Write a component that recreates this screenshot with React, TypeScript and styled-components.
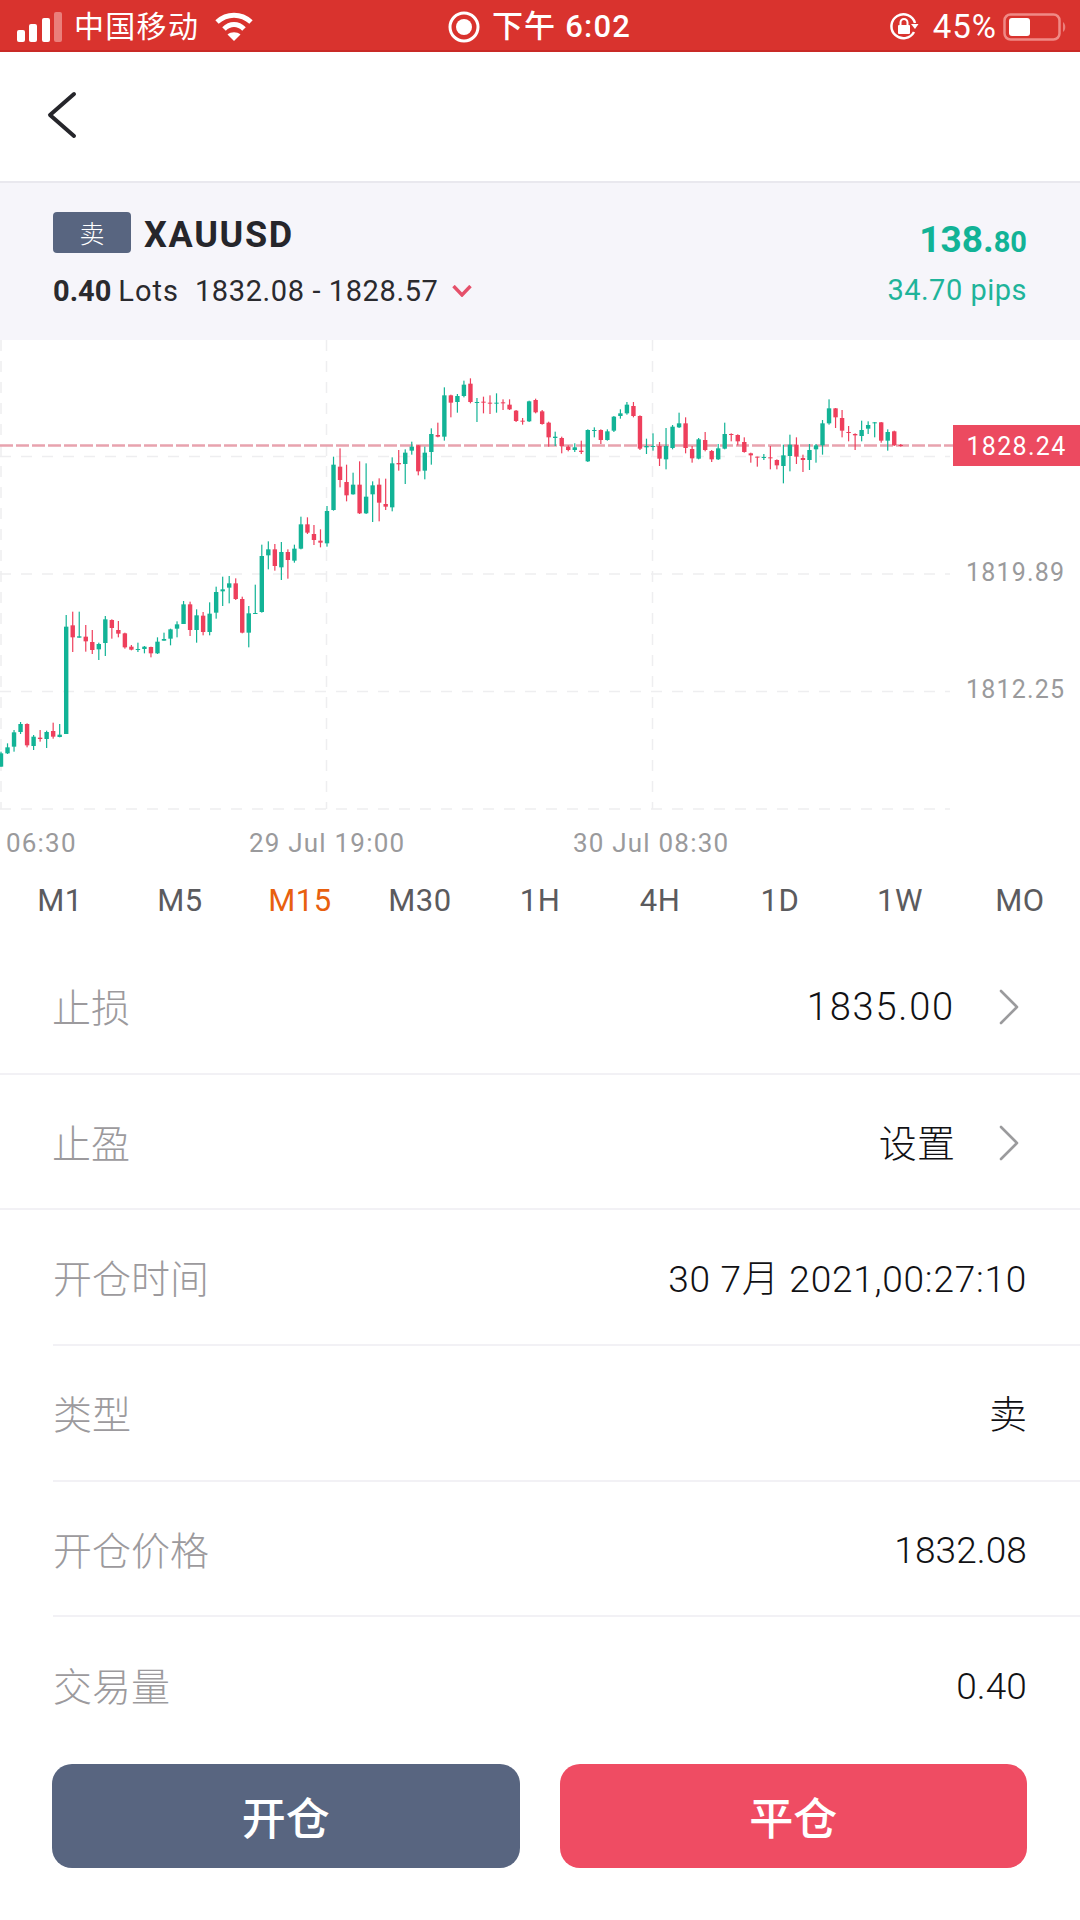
import React from 'react'
import styled, { createGlobalStyle } from 'styled-components'

const GlobalStyle = createGlobalStyle`
  html, body {
    margin: 0;
    padding: 0;
    background: #fff;
  }
  * {
    box-sizing: border-box;
  }
`

const FONT = `Roboto, "Noto Sans CJK SC", sans-serif`
const UP = '#12b396'
const DOWN = '#ee3f5c'

const Page = styled.div`
  width: 1080px;
  height: 1920px;
  overflow: hidden;
  display: flex;
  flex-direction: column;
  background: #fff;
  font-family: ${FONT};
`

const StatusBar = styled.div`
  height: 52px;
  flex: none;
  padding: 4px 13px 0 17px;
  display: grid;
  grid-template-columns: 1fr auto 1fr;
  align-items: center;
  background: #d9332e;
  border-bottom: 2px solid #c92a26;
  color: #fff;
`

const StatusGroup = styled.div<{ $end?: boolean }>`
  display: flex;
  align-items: center;
  justify-content: ${p => (p.$end ? 'flex-end' : 'flex-start')};
`

const Carrier = styled.span`
  margin: 0 15px 0 11px;
  font-size: 30px;
  line-height: 40px;
  letter-spacing: 1.3px;
`

const Clock = styled.span`
  margin: 0 5px 0 12px;
  font-size: 31px;
  line-height: 40px;
  font-weight: 500;
  letter-spacing: 1.2px;
`

const BatteryText = styled.span`
  margin: 0 6px 0 14px;
  font-size: 33px;
  line-height: 40px;
  letter-spacing: 1px;
`

const Nav = styled.div`
  height: 129px;
  flex: none;
  padding: 0 0 4px 46px;
  display: flex;
  align-items: center;
`

const Quote = styled.div`
  height: 159px;
  flex: none;
  padding: 28px 53px 0 53px;
  display: flex;
  justify-content: space-between;
  background: #f6f5fa;
  border-top: 2px solid #e9e8ee;
`

const QuoteSide = styled.div<{ $end?: boolean }>`
  display: flex;
  flex-direction: column;
  align-items: ${p => (p.$end ? 'flex-end' : 'flex-start')};
`

const TitleRow = styled.div`
  height: 42px;
  display: flex;
  align-items: center;
`

const SideBadge = styled.span`
  width: 78px;
  height: 41px;
  margin-right: 13px;
  display: flex;
  align-items: center;
  justify-content: center;
  background: #586580;
  border-radius: 4px;
  color: #fff;
  font-size: 25px;
  font-weight: 300;
`

const Symbol = styled.span`
  padding-top: 5px;
  font-size: 36px;
  font-weight: 700;
  letter-spacing: 1.7px;
  color: #26262b;
`

const InfoRow = styled.div`
  margin-top: 18px;
  height: 40px;
  display: flex;
  align-items: center;
  font-size: 29px;
  color: #2a2a2e;
`

const Lots = styled.b`
  font-weight: 700;
  margin-right: 7px;
`

const LotsUnit = styled.span`
  letter-spacing: 1px;
`

const Prices = styled.span`
  margin: 0 14px 0 16px;
  letter-spacing: .6px;
`

const Profit = styled.div`
  margin-top: 8px;
  height: 42px;
  color: ${UP};
  font-size: 37px;
  font-weight: 700;
  line-height: 42px;
`

const ProfitCents = styled.span`
  font-size: 29px;
`

const Pips = styled.div`
  margin-top: 9px;
  height: 40px;
  line-height: 40px;
  color: #1fb49a;
  font-size: 29px;
  letter-spacing: .5px;
`

const Chart = styled.div`
  position: relative;
  height: 530px;
  flex: none;
  background: #fff;
`

const ChartSvg = styled.svg`
  display: block;
  width: 1080px;
  height: 530px;
`

const AxisText = styled.text`
  font-family: ${FONT};
  font-size: 25px;
  letter-spacing: 1.2px;
  fill: #9a9a9c;
`

const TimeText = styled(AxisText)`
  font-size: 26px;
`

const PriceTag = styled.div`
  position: absolute;
  left: 953px;
  top: 85px;
  width: 127px;
  height: 41px;
  padding-top: 2px;
  display: flex;
  align-items: center;
  justify-content: center;
  background: #ec4a60;
  color: #fff;
  font-size: 25px;
  letter-spacing: 1.3px;
`

const Tabs = styled.div`
  height: 60px;
  margin-bottom: 9px;
  flex: none;
  display: grid;
  grid-template-columns: repeat(9, 120px);
`

const Tab = styled.div<{ $active?: boolean }>`
  display: flex;
  align-items: center;
  justify-content: center;
  font-size: 31px;
  letter-spacing: .5px;
  color: ${p => (p.$active ? '#e8600f' : '#5b5b5e')};
`

const Row = styled.div<{ $inset?: boolean; $last?: boolean }>`
  height: 135.7px;
  flex: none;
  margin-left: ${p => (p.$inset ? '53px' : '0')};
  padding: 0 53px 2px ${p => (p.$inset ? '0' : '52px')};
  display: flex;
  align-items: center;
  justify-content: space-between;
  border-bottom: ${p => (p.$last ? 'none' : '2px solid #f2f1f5')};
`

const Label = styled.span`
  font-size: 39px;
  font-weight: 300;
  color: #9c9a9d;
`

const ValueGroup = styled.div`
  display: flex;
  align-items: center;
`

const Value = styled.span<{ $numeric?: boolean; $wide?: boolean }>`
  padding-top: ${p => (p.$numeric ? '5px' : '0')};
  font-size: ${p => (p.$numeric || p.$wide ? '37px' : '38px')};
  font-weight: 300;
  letter-spacing: ${p => (p.$wide ? '.75px' : '.1px')};
  color: #111114;
`

const BigValue = styled(Value)`
  font-size: 38px;
  letter-spacing: 1.8px;
`

const Arrow = styled.svg`
  display: block;
  margin: 4px 8px 0 44px;
`

const Actions = styled.div`
  padding: 11px 53px 0 52px;
  display: grid;
  grid-template-columns: 1fr 1fr;
  gap: 40px;
`

const ActionButton = styled.button<{ $tone: string }>`
  height: 104px;
  border: 0;
  border-radius: 20px;
  background: ${p => p.$tone};
  color: #fff;
  font-family: ${FONT};
  font-size: 44px;
  font-weight: 500;
`

// wick top, wick bottom, body top, body bottom, 1 = green, measured in the picture at 3x height
const CANDLES: [number, number, number, number, number][] = [
  [1235,1280,1240,1280,1],[1210,1242,1222,1240,1],[1170,1235,1177,1220,1],[1146,1182,1152,1176,1],
  [1150,1222,1152,1216,0],[1185,1230,1190,1218,1],[1170,1205,1193,1197,0],[1172,1224,1176,1197,1],
  [1148,1196,1173,1190,0],[1152,1192,1184,1191,1],[825,1182,860,1182,1],[815,936,856,892,0],
  [815,893,889,893,1],[855,935,890,904,0],[870,942,906,930,0],[908,960,912,928,1],
  [828,948,838,909,1],[838,896,840,864,0],[843,892,870,881,0],[878,926,880,922,0],
  [915,931,920,929,0],[908,936,927,930,1],[918,940,920,927,1],[920,952,921,940,0],
  [892,942,905,940,1],[878,902,897,902,1],[866,916,868,896,1],[844,892,853,866,1],
  [783,852,793,852,1],[785,888,793,870,0],[808,908,826,870,1],[816,886,827,876,0],
  [787,886,821,876,1],[740,836,756,818,1],[710,798,748,754,1],[708,790,730,743,1],
  [715,780,730,777,0],[770,880,777,878,0],[798,922,820,878,1],[734,822,819,821,1],
  [614,818,648,816,1],[604,688,628,646,1],[612,692,628,678,0],[606,720,636,682,1],
  [628,716,636,660,0],[614,668,626,662,1],[530,628,553,626,1],[532,582,553,578,0],
  [555,615,582,600,0],[568,622,602,608,0],[498,620,513,610,1],[350,512,374,510,1],
  [325,442,380,420,0],[374,484,426,466,0],[398,464,434,463,1],[364,522,434,520,0],
  [370,522,470,520,1],[424,546,436,463,1],[415,544,434,488,0],[416,510,492,500,0],
  [352,514,370,502,1],[330,392,369,373,0],[328,432,338,372,1],[305,344,320,332,1],
  [315,406,316,394,0],[320,418,338,392,1],[265,374,282,336,1],[248,292,285,290,0],
  [142,302,166,290,1],[164,232,166,188,0],[162,218,168,186,1],[122,172,134,168,1],
  [115,190,131,186,0],[174,246,186,188,1],[170,220,185,187,0],[166,222,188,190,0],
  [160,218,188,190,1],[178,210,187,189,0],[178,210,194,208,0],[210,246,212,243,0],
  [234,254,242,244,0],[182,246,184,244,1],[176,220,180,217,0],
  [210,254,214,252,0],[245,320,248,292,0],[275,318,290,294,1],[290,340,294,318,0],
  [316,334,320,330,0],[310,336,322,330,1],[302,342,332,336,0],[268,366,270,364,1],
  [262,292,270,272,1],[268,312,270,300,0],[268,302,274,300,1],[228,276,230,272,1],
  [208,236,220,228,1],[186,224,194,220,1],[186,232,198,228,0],[226,330,228,326,0],
  [296,342,318,322,1],[280,332,318,320,1],[306,378,318,356,0],[264,388,318,358,1],
  [255,328,260,324,1],[218,264,250,262,1],[232,340,250,324,0],[318,368,327,355,0],
  [294,358,298,356,1],[276,334,300,330,0],[330,366,333,358,0],[312,360,325,358,1],
  [248,328,282,326,1],[280,304,282,284,0],[283,316,285,304,0],[292,338,306,336,0],
  [338,368,340,346,0],[350,380,350,352,0],[342,360,351,353,1],[318,388,352,355,0],
  [358,388,360,376,0],[314,430,346,378,1],[284,394,314,348,1],[292,372,314,350,0],
  [344,396,354,360,0],[312,390,330,360,1],[312,368,316,328,1],[240,344,250,316,1],
  [178,254,205,250,1],[204,264,205,232,0],[210,292,234,272,0],[258,304,276,278,0],
  [280,330,282,286,0],[242,304,270,288,1],[244,282,255,266,1],[246,292,247,249,1],
  [246,308,247,302,0],[268,332,276,302,1],[272,318,274,316,0],[312,320,315,317,0],
]

const GRID_Y = [-1, 116.5, 234, 351.5, 469]
const GRID_X = [1, 326.5, 652.5]

const CandleChart = () => (
  <ChartSvg viewBox="0 0 1080 530">
    {GRID_Y.map(y => (
      <line key={y} x1="0" x2="950" y1={y} y2={y} stroke="#eeeef0" strokeWidth="1.5" strokeDasharray="11 10" />
    ))}
    {GRID_X.map(x => (
      <line key={x} x1={x} x2={x} y1="0" y2="469" stroke="#eeeef0" strokeWidth="1.5" strokeDasharray="11 10" />
    ))}
    <line x1="0" x2="953" y1="105.5" y2="105.5" stroke="#e8a3ae" strokeWidth="2.4" strokeDasharray="13 3" />
    {CANDLES.map(([wt, wb, bt, bb, up], i) => {
      const x = 1 + i * 6.52
      const color = up ? UP : DOWN
      return (
        <g key={i} fill={color}>
          <rect x={x - 0.6} y={wt / 3} width="1.2" height={(wb - wt) / 3} />
          <rect x={x - 2.2} y={bt / 3} width="4.4" height={Math.max(bb - bt, 3) / 3} />
        </g>
      )
    })}
    <AxisText x="966" y="241">1819.89</AxisText>
    <AxisText x="966" y="358">1812.25</AxisText>
    <TimeText x="6" y="512">06:30</TimeText>
    <TimeText x="249" y="512">29 Jul 19:00</TimeText>
    <TimeText x="573" y="512">30 Jul 08:30</TimeText>
  </ChartSvg>
)

const SignalIcon = () => (
  <svg width="46" height="30" viewBox="0 0 46 30" fill="#fff">
    <rect x="0" y="18" width="8" height="12" rx="2" />
    <rect x="12" y="12" width="8" height="18" rx="2" />
    <rect x="25" y="6" width="8" height="24" rx="2" />
    <rect x="37" y="0" width="8" height="30" rx="2" fill="#ea7f7b" />
  </svg>
)

const WifiIcon = () => (
  <svg width="40" height="30" viewBox="0 0 40 30" fill="none" stroke="#fff" strokeWidth="5">
    <path d="M3 10 C13 1 27 1 37 10" />
    <path d="M10 17 C16 11 24 11 30 17" />
    <path d="M20 29 L13.5 22.5 C17 19.5 23 19.5 26.5 22.5 Z" fill="#fff" stroke="none" />
  </svg>
)

const RecordIcon = () => (
  <svg width="32" height="32" viewBox="0 0 32 32">
    <circle cx="16" cy="16" r="14" fill="none" stroke="#fff" strokeWidth="3" />
    <circle cx="16" cy="16" r="8" fill="#fff" />
  </svg>
)

const RotateLockIcon = () => (
  <svg width="30" height="30" viewBox="0 0 30 30" fill="none" stroke="#fff" strokeWidth="2.5">
    <path d="M25 20 A12 12 0 1 1 26 11" />
    <path d="M22 12 L29.5 12 L26 17 Z" fill="#fff" stroke="none" />
    <rect x="9" y="13" width="12" height="9" rx="1" fill="#fff" stroke="none" />
    <path d="M11.5 13 V10.5 A3.5 3.5 0 0 1 18.5 10.5 V13" strokeWidth="2" />
  </svg>
)

const BatteryIcon = () => (
  <svg width="64" height="28" viewBox="0 0 64 28">
    <rect x="1.5" y="1.5" width="55" height="25" rx="6" fill="none" stroke="#f08a86" strokeWidth="2.5" />
    <rect x="6" y="5" width="21" height="18" rx="3" fill="#fff" />
    <path d="M60 9 C63 11 63 17 60 19 Z" fill="#ea7f7b" />
  </svg>
)

const BackIcon = () => (
  <svg width="32" height="48" viewBox="0 0 32 48" fill="none" stroke="#26262b" strokeWidth="4" strokeLinecap="round" strokeLinejoin="round">
    <path d="M28 3 L4 24 L28 45" />
  </svg>
)

const DownIcon = () => (
  <svg width="20" height="12" viewBox="0 0 20 12" fill="none" stroke="#e5506a" strokeWidth="3.4">
    <path d="M1.5 1 L10 10 L18.5 1" />
  </svg>
)

const RowArrow = () => (
  <Arrow width="20" height="36" viewBox="0 0 20 36" fill="none" stroke="#9b9b9d" strokeWidth="2.6" strokeLinecap="round" strokeLinejoin="round">
    <path d="M2 2 L18 18 L2 34" />
  </Arrow>
)

const TIMEFRAMES = ['M1', 'M5', 'M15', 'M30', '1H', '4H', '1D', '1W', 'MO']

const App = () => {
  return (
    <Page>
      <GlobalStyle />
      <StatusBar>
        <StatusGroup>
          <SignalIcon />
          <Carrier>中国移动</Carrier>
          <WifiIcon />
        </StatusGroup>
        <StatusGroup>
          <RecordIcon />
          <Clock>下午 6:02</Clock>
        </StatusGroup>
        <StatusGroup $end>
          <RotateLockIcon />
          <BatteryText>45%</BatteryText>
          <BatteryIcon />
        </StatusGroup>
      </StatusBar>
      <Nav>
        <BackIcon />
      </Nav>
      <Quote>
        <QuoteSide>
          <TitleRow>
            <SideBadge>卖</SideBadge>
            <Symbol>XAUUSD</Symbol>
          </TitleRow>
          <InfoRow>
            <Lots>0.40</Lots>
            <LotsUnit>Lots</LotsUnit>
            <Prices>1832.08 - 1828.57</Prices>
            <DownIcon />
          </InfoRow>
        </QuoteSide>
        <QuoteSide $end>
          <Profit>
            138.<ProfitCents>80</ProfitCents>
          </Profit>
          <Pips>34.70 pips</Pips>
        </QuoteSide>
      </Quote>
      <Chart>
        <CandleChart />
        <PriceTag>1828.24</PriceTag>
      </Chart>
      <Tabs>
        {TIMEFRAMES.map(t => (
          <Tab key={t} $active={t === 'M15'}>{t}</Tab>
        ))}
      </Tabs>
      <Row>
        <Label>止损</Label>
        <ValueGroup>
          <BigValue $numeric>1835.00</BigValue>
          <RowArrow />
        </ValueGroup>
      </Row>
      <Row>
        <Label>止盈</Label>
        <ValueGroup>
          <Value>设置</Value>
          <RowArrow />
        </ValueGroup>
      </Row>
      <Row $inset>
        <Label>开仓时间</Label>
        <Value $wide>30 7月 2021,00:27:10</Value>
      </Row>
      <Row $inset>
        <Label>类型</Label>
        <Value>卖</Value>
      </Row>
      <Row $inset>
        <Label>开仓价格</Label>
        <Value $numeric>1832.08</Value>
      </Row>
      <Row $inset $last>
        <Label>交易量</Label>
        <Value $numeric>0.40</Value>
      </Row>
      <Actions>
        <ActionButton $tone="#586580">开仓</ActionButton>
        <ActionButton $tone="#ef4c63">平仓</ActionButton>
      </Actions>
    </Page>
  )
}

export default App
